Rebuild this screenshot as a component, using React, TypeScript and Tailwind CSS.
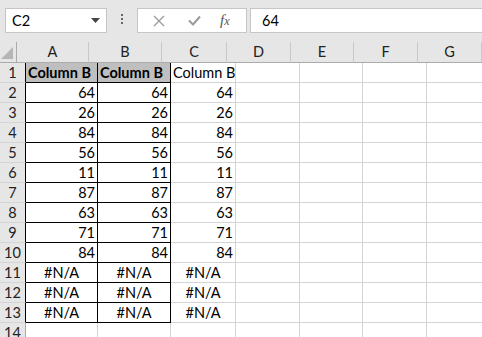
const font = "font-['Lato','Liberation_Sans',sans-serif]";

const cols = [
  { key: "A", w: "w-[72px]" },
  { key: "B", w: "w-[73px]" },
  { key: "C", w: "w-[65px]" },
  { key: "D", w: "w-[64px]" },
  { key: "E", w: "w-[63px]" },
  { key: "F", w: "w-[64px]" },
  { key: "G", w: "w-[64px]" },
];

const values = [64, 26, 84, 56, 11, 87, 63, 71, 84];

function cellText(row: number, col: number): string {
  if (col > 2) return "";
  if (row === 1) return "Column B";
  if (row <= 10) return String(values[row - 2]);
  if (row <= 13) return "#N/A";
  return "";
}

export default function App() {
  const rows = Array.from({ length: 14 }, (_, i) => i + 1);

  return (
    <div className={`h-[337px] w-[482px] overflow-hidden bg-[#e6e6e6] text-[14.5px] text-black ${font}`}>
      {/* formula bar */}
      <div className="flex h-[42px] items-start pt-[8px]">
        <div className="ml-[5px] flex h-[25px] w-[102px] items-center justify-between border border-[#c6c6c6] bg-white pl-[6px] pr-[6px]">
          <span>C2</span>
          <svg width="9" height="5" viewBox="0 0 9 5">
            <path d="M0 0h9L4.5 5z" fill="#444" />
          </svg>
        </div>
        <div className="flex w-[30px] flex-col items-center gap-[2px] pt-[6px]">
          <span className="h-[2px] w-[2px] bg-[#666]" />
          <span className="h-[2px] w-[2px] bg-[#666]" />
          <span className="h-[2px] w-[2px] bg-[#666]" />
        </div>
        <div className="flex h-[25px] w-[110px] items-center border border-[#c6c6c6] bg-white">
          <svg width="12" height="12" viewBox="0 0 12 12" className="ml-[15px]">
            <path d="M1 1l10 10M11 1L1 11" stroke="#9a9a9a" strokeWidth="1.3" />
          </svg>
          <svg width="13" height="11" viewBox="0 0 13 11" className="ml-[23px]">
            <path d="M1 5.5l4 4L12 1.5" stroke="#9a9a9a" strokeWidth="2" fill="none" />
          </svg>
          <span className="ml-[19px] font-['Liberation_Serif',serif] text-[15px] italic text-[#555]">
            f<span className="text-[12px]">x</span>
          </span>
        </div>
        <div className="ml-[3px] flex h-[25px] flex-1 items-center border border-r-0 border-[#c6c6c6] bg-white pl-[11px]">
          64
        </div>
      </div>

      {/* column headers */}
      <div className="flex h-[21px]">
        <div className="relative w-[26px] border-b border-r border-[#ababab]">
          <svg width="12" height="12" viewBox="0 0 12 12" className="absolute bottom-[3px] right-[3px]">
            <path d="M12 0V12H0z" fill="#b5b5b5" />
          </svg>
        </div>
        {cols.map((c) => (
          <div
            key={c.key}
            className={`${c.w} flex shrink-0 items-center justify-center border-b border-r border-b-[#ababab] border-r-[#c9c9c9] text-[#222]`}
          >
            {c.key}
          </div>
        ))}
      </div>

      {/* rows */}
      {rows.map((r) => (
        <div key={r} className="flex h-[20px]">
          <div
            className={`flex w-[26px] shrink-0 items-center justify-center border-b border-r border-b-[#d4d4d4] pt-[1px] text-[#222] ${
              r <= 13 ? "border-r-black" : "border-r-[#ababab]"
            }`}
          >
            {r}
          </div>
          {cols.map((c, ci) => {
            const text = cellText(r, ci);
            const boxed = ci < 2 && r <= 13;
            const header = ci < 2 && r === 1;
            const na = r >= 11 && r <= 13 && ci <= 2;
            const num = r >= 2 && r <= 10 && ci <= 2;
            return (
              <div
                key={c.key}
                className={`${c.w} flex shrink-0 items-center overflow-hidden whitespace-nowrap border-b border-r pt-[1px] ${
                  boxed ? "border-black" : "border-[#d4d4d4]"
                } ${header ? "bg-[#bfbfbf] font-bold" : "bg-white"} ${
                  num ? "justify-end pr-[2px]" : na ? "justify-center" : "pl-[2px]"
                }`}
              >
                {text}
              </div>
            );
          })}
        </div>
      ))}
    </div>
  );
}
